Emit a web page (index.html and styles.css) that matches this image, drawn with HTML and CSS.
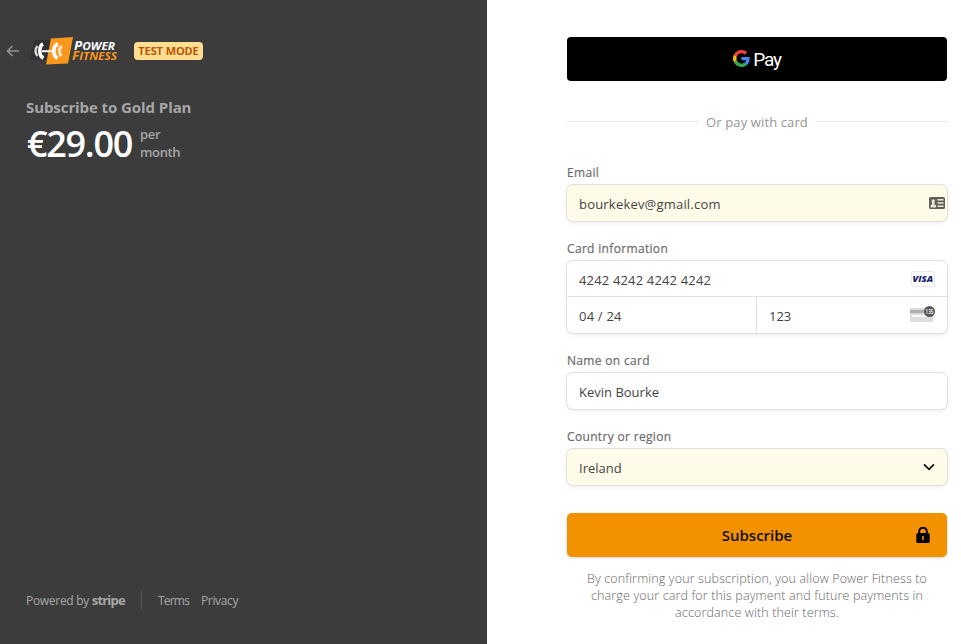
FILE: index.html
```html
<!DOCTYPE html>
<html lang="en">
<head>
<meta charset="utf-8">
<title>Subscribe to Gold Plan</title>
<link rel="stylesheet" href="styles.css">
</head>
<body>
<div class="checkout">
  <aside class="summary">
    <header class="brand">
      <svg class="back" width="14" height="12" viewBox="0 0 14 12"><path d="M1.500 6H13M6.500 1L1.500 6l5 5" fill="none" stroke="#929292" stroke-width="1.600"/></svg>
      <svg class="logo" width="90" height="30" viewBox="0 0 90 30">
        <path d="M4 4h16l-4 20H0z" fill="#303030"/>
        <path d="M21 2.500L43 1l-5 26.500-22 1z" fill="#f9981d"/>
        <path d="M7.500 10Q5.500 12 5.500 15T7.500 20" fill="none" stroke="#d8d8d8" stroke-width="2.400"/>
        <path d="M13 8Q9.800 9.500 9.800 15T13.500 22" fill="none" stroke="#fff" stroke-width="3.600"/>
        <path d="M12 15.200h10" stroke="#f4f4f4" stroke-width="2"/>
        <path d="M28 8Q23.800 9.500 23.800 15T27.500 22" fill="none" stroke="#fff" stroke-width="3.600"/>
        <path d="M32 10.500Q29.500 11.500 29.500 15T31.500 20" fill="none" stroke="#fbe3c2" stroke-width="3"/>
        <g font-family="Open Sans, sans-serif" font-weight="700" font-style="italic">
          <text x="44" y="14" font-size="12.500" fill="#fff" textLength="41" lengthAdjust="spacingAndGlyphs">P<tspan font-size="11">OWER</tspan></text>
          <text x="42" y="23.800" font-size="12" fill="#f9981d" textLength="45" lengthAdjust="spacingAndGlyphs">F<tspan font-size="10.500">ITNESS</tspan></text>
        </g>
      </svg>
      <span class="badge">TEST MODE</span>
    </header>
    <h1 class="plan">Subscribe to Gold Plan</h1>
    <div class="price"><strong class="amount">€29.00</strong><span class="period">per<br>month</span></div>
    <footer class="links">
      <span class="powered">Powered by <b class="stripe">stripe</b></span>
      <a class="terms">Terms</a><a>Privacy</a>
    </footer>
  </aside>
  <main class="payment">
    <form class="form">
      <div class="gpay">
        <svg width="17" height="17" viewBox="0 0 48 48"><path fill="#EA4335" d="M24 9.500c3.540 0 6.710 1.220 9.210 3.600l6.850-6.850C35.900 2.380 30.470 0 24 0 14.620 0 6.510 5.380 2.560 13.220l7.980 6.190C12.430 13.720 17.740 9.500 24 9.500z"/><path fill="#4285F4" d="M46.980 24.550c0-1.570-.15-3.090-.38-4.550H24v9.020h12.940c-.58 2.960-2.260 5.480-4.780 7.180l7.730 6c4.510-4.180 7.090-10.360 7.090-17.650z"/><path fill="#FBBC05" d="M10.530 28.590A14.500 14.500 0 0 1 9.770 24c0-1.600.27-3.140.76-4.590l-7.980-6.190A23.900 23.900 0 0 0 0 24c0 3.880.92 7.540 2.560 10.780z"/><path fill="#34A853" d="M24 48c6.480 0 11.930-2.130 15.890-5.810l-7.730-6c-2.150 1.450-4.920 2.300-8.160 2.300-6.260 0-11.570-4.220-13.470-9.910l-7.980 6.190C6.510 42.620 14.620 48 24 48z"/></svg>
        <span class="pay">Pay</span>
      </div>
      <div class="divider"><span>Or pay with card</span></div>
      <div class="label l-email">Email</div>
      <div class="field filled email"><span class="v-email">bourkekev@gmail.com</span>
        <svg width="16" height="12" viewBox="0 0 16 12"><rect width="16" height="12" rx="1.500" fill="#625f59"/><path d="M1.500 10.500V8.500l1.500-1V5.500L2.500 4a1.700 1.700 0 1 1 3.400 0L5.500 5.500v2l1.500 1v2zM8.500 2H14.500v1.500h-6zm0 3.300h6v1.500h-6zm0 3.300h6v1.500h-6z" fill="#e9e6d5"/></svg>
      </div>
      <div class="label">Card information</div>
      <div class="card">
        <div class="cell number"><span class="v-num">4242 4242 4242 4242</span>
          <svg width="24" height="16" viewBox="0 0 24 16"><rect x=".5" y=".5" width="23" height="15" rx="1.500" fill="#fff" stroke="#e9e9e9"/><text x="1.500" y="11.300" font-family="Open Sans, sans-serif" font-size="9" font-weight="800" font-style="italic" fill="#1a2275" textLength="20.500" lengthAdjust="spacingAndGlyphs">VISA</text></svg>
        </div>
        <div class="row">
          <div class="cell expiry"><span class="v-exp">04 / 24</span></div>
          <div class="cell cvc"><span>123</span>
            <svg width="26" height="18" viewBox="0 0 26 18"><rect y="3" width="23" height="14" rx="1.500" fill="#dcdcdc"/><path d="M0 5h15v3H0z" fill="#adadad"/><path d="M2 10h15v2H2z" fill="#fff"/><circle cx="19.500" cy="6.500" r="5.500" fill="#565656"/><text x="15.500" y="8.900" font-family="Open Sans, sans-serif" font-size="7" font-weight="600" fill="#fff" textLength="8" lengthAdjust="spacingAndGlyphs">135</text></svg>
          </div>
        </div>
      </div>
      <div class="label">Name on card</div>
      <div class="field"><span>Kevin Bourke</span></div>
      <div class="label">Country or region</div>
      <div class="field filled select"><span>Ireland</span>
        <svg width="12" height="8" viewBox="0 0 12 8"><path d="M1 1.300l5 5 5-5" fill="none" stroke="#111" stroke-width="1.800"/></svg>
      </div>
      <div class="subscribe"><span>Subscribe</span>
        <svg width="14" height="16" viewBox="0 0 14 16"><path d="M3.200 7V4.500a3.800 3.800 0 0 1 7.600 0V7" fill="none" stroke="#000" stroke-width="2"/><rect x=".3" y="6" width="13.400" height="10" rx="1.500" fill="#000"/><path d="M6.200 9h1.600v4H6.200z" fill="#f29400"/></svg>
      </div>
      <p class="terms-note">By confirming your subscription, you allow Power Fitness to<br>charge your card for this payment and future payments in<br>accordance with their terms.</p>
    </form>
  </main>
</div>
</body>
</html>
```
FILE: styles.css
```css
* { box-sizing: border-box; }
body { margin: 0; font-family: "Open Sans", "Noto Sans", sans-serif; color: #444; }
.checkout { display: flex; width: 961px; height: 644px; overflow: hidden; background: #fff; }
.summary { width: 487px; background: #3c3c3c; color: #a7a7a7; display: flex; flex-direction: column; padding: 36px 0 34px 26px; }
.brand { display: flex; align-items: center; height: 30px; margin-left: -20px; }
.logo { margin-left: 10px; }
.badge { margin-left: 14px; width: 69px; height: 18px; line-height: 18px; border-radius: 4px; background: #ffde92; color: #bb5504; font-size: 11px; font-weight: 700; letter-spacing: -.1px; text-align: center; white-space: nowrap; }
.plan { margin: 31px 0 0; font-size: 15px; line-height: 20px; font-weight: 700; white-space: nowrap; letter-spacing: -.08px; }
.price { display: flex; align-items: center; margin-top: 6px; height: 42px; }
.amount { color: #fff; font-size: 36px; line-height: 42px; font-weight: 600; width: 113px; margin-left: 1px; letter-spacing: -1.3px; }
.period { font-size: 13px; line-height: 18px; font-weight: 600; letter-spacing: -.35px; margin-top: -2px; }
.links { margin-top: auto; display: flex; align-items: center; height: 20px; font-size: 12px; white-space: nowrap; letter-spacing: -.35px; }
.powered { width: 116px; height: 18px; line-height: 18px; border-right: 1px solid #555; letter-spacing: -.3px; }
.stripe { font-size: 13px; letter-spacing: -.8px; }
.terms { margin-left: 16px; width: 43px; letter-spacing: -.8px; }
.payment { flex: 1; padding: 37px 14px 0 80px; }
.form { width: 380px; }
.gpay { height: 44px; border-radius: 4px; background: #000; display: flex; justify-content: center; align-items: center; gap: 3px; }
.gpay svg { margin-top: -2px; }
.pay { font-family: Roboto, sans-serif; font-size: 19px; color: #fff; letter-spacing: -1.2px; }
.divider { display: flex; align-items: center; gap: 8px; height: 20px; margin-top: 30px; font-size: 13px; color: #969696; white-space: nowrap; letter-spacing: .12px; }
.divider span { padding-top: 2px; }
.divider::before, .divider::after { content: ""; flex: 1; height: 1px; background: #e6e6e6; }
.label { height: 17px; line-height: 17px; margin: 19px 0 4px; font-size: 12px; font-weight: 500; color: #6d6d6d; white-space: nowrap; letter-spacing: .33px; -webkit-text-stroke: .2px #6d6d6d; }
.l-email { margin-top: 33px; }
.field, .card { border-radius: 6px; background: #fff; box-shadow: 0 0 0 1px #e0e0e0, 0 2px 4px rgba(0,0,0,.08); font-size: 13px; }
.field { height: 36px; padding: 2px 12px 0; display: flex; align-items: center; justify-content: space-between; }
.filled { background: #fefce8; }
.email { padding-right: 2px; }
.email svg, .select svg { margin-top: -2px; }
.v-email { letter-spacing: .2px; }
.v-num { letter-spacing: .16px; padding-top: 1px; }
.v-exp { letter-spacing: .2px; }
.cell { height: 36px; padding: 1px 12px 0; display: flex; align-items: center; justify-content: space-between; }
.number { border-bottom: 1px solid #e0e0e0; }
.row { display: flex; height: 36px; }
.expiry { width: 190px; border-right: 1px solid #e0e0e0; }
.cvc { flex: 1; padding-right: 11px; }
.cvc svg { margin-top: -3px; }
.subscribe { height: 44px; margin-top: 28px; border-radius: 5px; background: #f29200; color: #111; box-shadow: 0 1px 3px rgba(0,0,0,.2); display: grid; grid-template-columns: 1fr auto 1fr; align-items: center; padding: 0 17px; font-size: 15px; font-weight: 600; }
.subscribe span { grid-column: 2; }
.subscribe svg { justify-self: end; }
.terms-note { margin: 13px 0 0; font-size: 12.5px; line-height: 17px; text-align: center; color: #666; white-space: nowrap; font-weight: 300; letter-spacing: .14px; }
```
